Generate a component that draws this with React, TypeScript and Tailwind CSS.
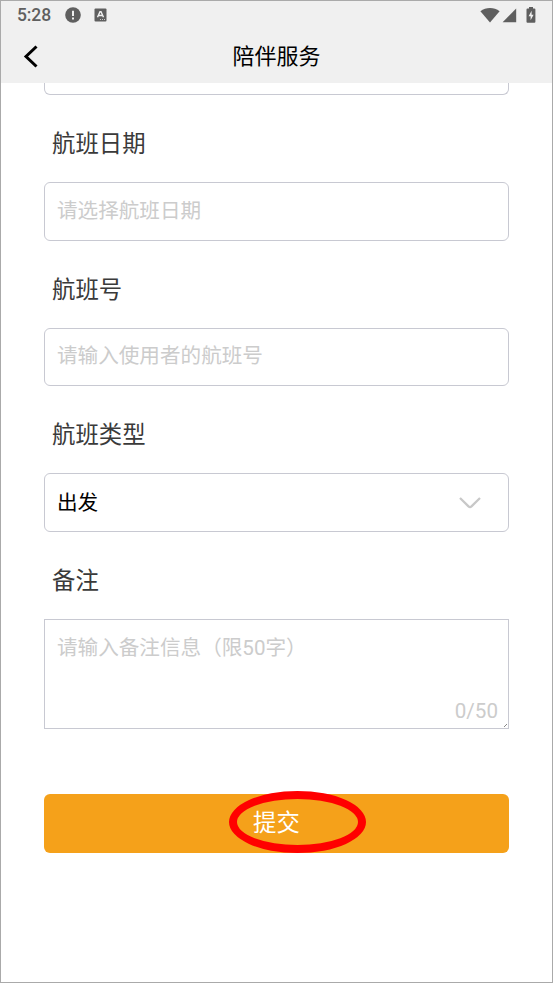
import React from "react";

type FieldProps = {
  label: string;
  children: React.ReactNode;
};

// label + kotak input
const Field: React.FC<FieldProps> = ({ label, children }) => (
  <div>
    <div className="h-[87px] pl-2 pt-[31px] text-[23.4px] leading-[36px] text-[#3a3a3a]">{label}</div>
    {children}
  </div>
);

const StatusBar: React.FC = () => (
  <div className="flex h-[27px] items-center justify-between pl-4 pr-[16px] text-[#5f5f5f]">
    <div className="flex items-center">
      <span className="w-[48px] pt-px font-[Roboto] text-[17.5px] leading-[26px] font-medium tracking-[-0.1px]">5:28</span>
      <svg width="16" height="16" viewBox="0 0 16 16" fill="currentColor">
        <circle cx="8" cy="8" r="7.8" />
        <path d="M7 3.7h2v5.4H7zM7 10.4h2v2H7z" fill="#f0f0f0" />
      </svg>
      <svg className="ml-[13px]" width="13" height="14" viewBox="0 0 13 14" fill="currentColor">
        <rect x="0.5" y="0.5" width="12" height="13" rx="1" />
        <path
          d="M3.5 9.3 6 3.6h1l2.5 5.7M4.6 7.5h3.8"
          fill="none"
          stroke="#f0f0f0"
          strokeWidth="1.4"
        />
        <path d="M6 11h1v1H6zM8 11h1v1H8zM10 11h1v1h-1z" fill="#c8c8c8" />
      </svg>
    </div>
    <div className="flex items-center">
      <svg width="20" height="16" viewBox="0 0 20 16" fill="currentColor">
        <path d="M0.4 4.2C6 -0.2 14 -0.2 19.6 4.2L10 15.6z" />
      </svg>
      <svg className="ml-[2px]" width="15" height="16" viewBox="0 0 15 16" fill="currentColor">
        <path d="M14.2 1.5v13.8H0.6z" />
      </svg>
      <svg className="ml-[9px]" width="10" height="16" viewBox="0 0 10 16" fill="currentColor">
        <path d="M3 0h4v1.5h1.4q1 0 1 1v12.3q0 1-1 1H1.5q-1 0-1-1V2.5q0-1 1-1H3z" />
        <path d="M5.6 3.8 2.6 9.3h2v4l3-5.6H5.6z" fill="#f0f0f0" />
      </svg>
    </div>
  </div>
);

const App: React.FC = () => {
  return (
    <div className="flex h-[983px] w-[553px] flex-col overflow-hidden border border-[#aaa] bg-white font-['Roboto','Noto_Sans_CJK_SC',sans-serif]">
      <header className="h-[82px] shrink-0 bg-[#f0f0f0]">
        <StatusBar />
        <div className="grid h-[55px] grid-cols-3 items-center">
          <button className="pl-[22px]">
            <svg width="16" height="24" viewBox="0 0 16 24" fill="none" stroke="#000" strokeWidth="3">
              <path d="M13.5 2.5 3 12.5l10.5 10" />
            </svg>
          </button>
          <h1 className="pt-[2px] text-center text-[22px] leading-[32px] text-black">陪伴服务</h1>
        </div>
      </header>

      <main className="px-[43px]">
        <div className="h-3 rounded-b-[6px] border border-t-0 border-[#c8c9d2]" />

        <Field label="航班日期">
          <div className="h-[58.6px] rounded-[6px] border border-[#c8c9d2] pl-3 pt-[11.5px] text-[20.6px] leading-[32px] text-[#ccc]">
            请选择航班日期
          </div>
        </Field>

        <Field label="航班号">
          <div className="h-[58.6px] rounded-[6px] border border-[#c8c9d2] pl-3 pt-[11.5px] text-[20.6px] leading-[32px] text-[#ccc]">
            请输入使用者的航班号
          </div>
        </Field>

        <Field label="航班类型">
          <div className="flex h-[58.6px] items-center justify-between rounded-[6px] border border-[#c8c9d2] pt-[2px] pl-3 pr-[27px] text-[20.6px] text-black">
            <span>出发</span>
            <svg width="22" height="14" viewBox="0 0 22 14" fill="none" stroke="#c8c8c8" strokeWidth="2.3">
              <path d="M1 2l8.5 8.3q1.5 1.3 3 0L21 2" />
            </svg>
          </div>
        </Field>

        <Field label="备注">
          <div className="relative h-[110px] border border-[#c8c9d2] pl-3 pt-[12px] text-[20.6px] leading-[32px] text-[#ccc]">
            请输入备注信息（限50字）
            <span className="absolute right-[10px] bottom-[1px]">0/50</span>
            <svg className="absolute right-[1px] bottom-[1px]" width="3" height="3" stroke="#888">
              <path d="M0 3l3-3" />
            </svg>
          </div>
        </Field>

        <button className="relative mt-[65px] block h-[59px] w-full rounded-[6px] bg-[#f5a11a] pb-px text-[23.4px] leading-[36px] text-white">
          提交
          {/* lingkaran merah penanda tombol */}
          <span className="absolute top-[-3px] left-[185px] h-[62px] w-[137px] rounded-[50%] border-8 border-[#f00]" />
        </button>
      </main>
    </div>
  );
};

export default App;
